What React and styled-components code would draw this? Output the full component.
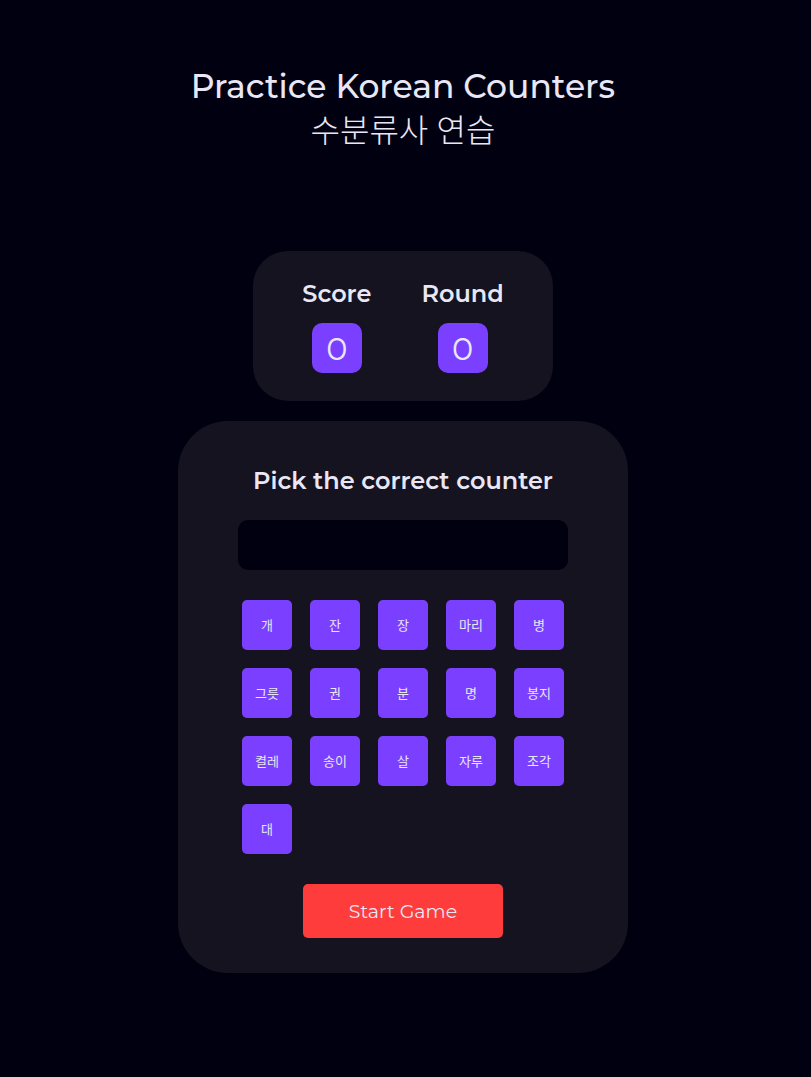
import React, { useState } from "react";
import styled, { createGlobalStyle, ThemeProvider } from "styled-components";

const theme = {
  background: "#010010",
  surface: "#14131f",
  text: "#e9e7f5",
  primary: "#7b40ff",
  accent: "#ff3c3c",
};

const GlobalStyle = createGlobalStyle`
  *, *::before, *::after { box-sizing: border-box; }
  body {
    margin: 0;
    background: ${theme.background};
    color: ${theme.text};
    font-family: Montserrat, Inter, "Noto Sans CJK KR", sans-serif;
  }
  h1, h2, p { margin: 0; }
  button, input { font-family: inherit; color: inherit; border: 0; }
`;

const Page = styled.main`
  display: flex;
  flex-direction: column;
  align-items: center;
  min-height: 100vh;
  padding: 64px 5px 104px 0;
`;

const Header = styled.header`
  text-align: center;
  margin-bottom: 98px;
`;

const Title = styled.h1`
  font-size: 33px;
  font-weight: 500;
  line-height: 45px;
`;

const Subtitle = styled.p`
  font-size: 32px;
  font-weight: 300;
  line-height: 44px;
`;

const Card = styled.section`
  width: 100%;
  background: ${({ theme }) => theme.surface};
`;

const ScoreCard = styled(Card)`
  display: flex;
  justify-content: center;
  gap: 50px;
  max-width: 300px;
  padding: 28px 0;
  border-radius: 35px;
  margin-bottom: 20px;
`;

const Stat = styled.div`
  display: flex;
  flex-direction: column;
  align-items: center;
  gap: 14px;
`;

const Heading = styled.h2`
  font-size: 24px;
  font-weight: 600;
  line-height: 30px;
`;

const StatValue = styled.div`
  display: grid;
  place-items: center;
  width: 50px;
  height: 50px;
  border-radius: 10px;
  background: ${({ theme }) => theme.primary};
  font-size: 32px;
  font-weight: 400;
`;

const GameCard = styled(Card)`
  display: flex;
  flex-direction: column;
  align-items: center;
  gap: 30px;
  max-width: 450px;
  padding: 45px 60px 35px;
  border-radius: 50px;
`;

const Prompt = styled.div`
  display: flex;
  flex-direction: column;
  align-items: center;
  gap: 24px;
  width: 100%;
`;

const PromptBox = styled.input`
  width: 100%;
  height: 50px;
  border-radius: 10px;
  background: ${({ theme }) => theme.background};
  font-size: 19px;
  text-align: center;
`;

const CounterGrid = styled.div`
  display: grid;
  grid-template-columns: repeat(5, 50px);
  gap: 18px;
`;

const CounterButton = styled.button`
  height: 50px;
  padding: 0 0 2px;
  border-radius: 5px;
  background: ${({ theme }) => theme.primary};
  font-size: 13px;
  cursor: pointer;
`;

const StartButton = styled.button`
  width: 200px;
  height: 54px;
  border-radius: 5px;
  background: ${({ theme }) => theme.accent};
  font-size: 19px;
  cursor: pointer;
`;

const counters = [
  "개", "잔", "장", "마리", "병",
  "그릇", "권", "분", "명", "봉지",
  "켤레", "송이", "살", "자루", "조각",
  "대",
];

export default function App() {
  const [round, setRound] = useState(0);

  return (
    <ThemeProvider theme={theme}>
      <GlobalStyle />
      <Page>
        <Header>
          <Title>Practice Korean Counters</Title>
          <Subtitle lang="ko">수분류사 연습</Subtitle>
        </Header>
        <ScoreCard>
          <Stat>
            <Heading>Score</Heading>
            <StatValue>0</StatValue>
          </Stat>
          <Stat>
            <Heading>Round</Heading>
            <StatValue>{round}</StatValue>
          </Stat>
        </ScoreCard>
        <GameCard>
          <Prompt>
            <Heading>
              <label htmlFor="prompt">Pick the correct counter</label>
            </Heading>
            <PromptBox id="prompt" type="text" readOnly value="" />
          </Prompt>
          <CounterGrid lang="ko">
            {counters.map((counter) => (
              <CounterButton key={counter} type="button">
                {counter}
              </CounterButton>
            ))}
          </CounterGrid>
          <StartButton type="button" onClick={() => setRound(1)}>
            Start Game
          </StartButton>
        </GameCard>
      </Page>
    </ThemeProvider>
  );
}
